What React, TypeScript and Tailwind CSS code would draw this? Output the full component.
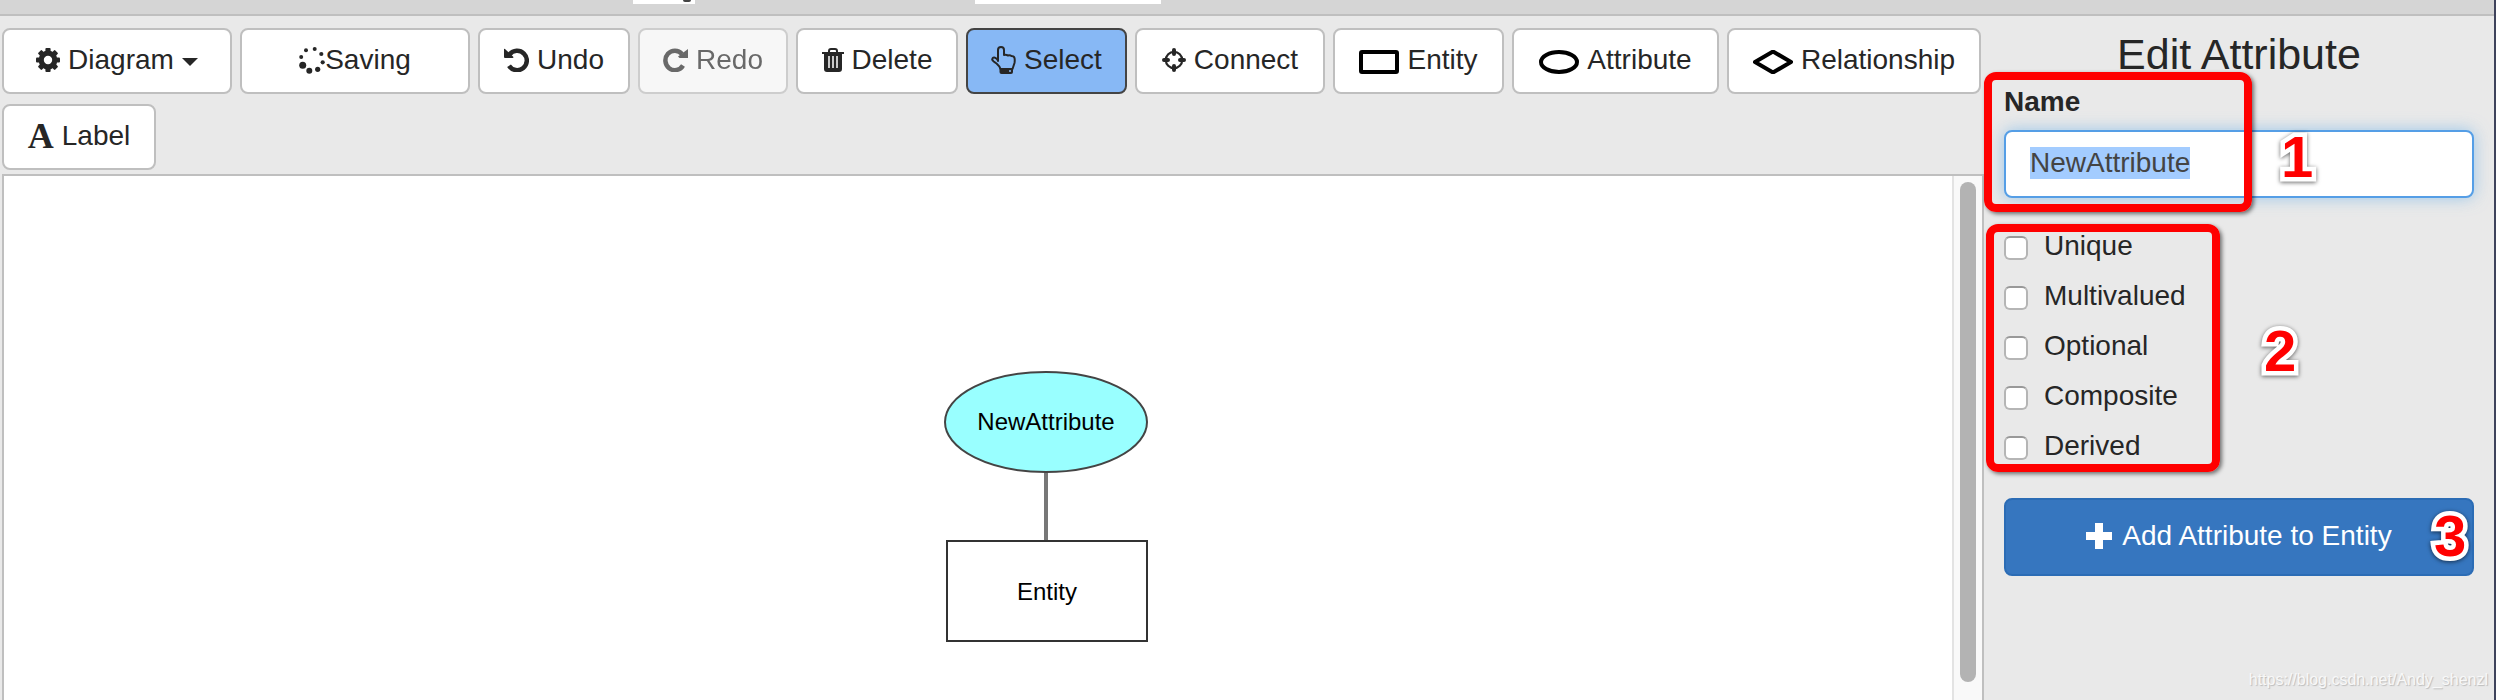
import type { ReactNode } from "react";
import { useEffect, useRef, useState } from "react";

type ToolProps = {
  icon: ReactNode;
  label: string;
  width: string;
  active?: boolean;
  disabled?: boolean;
  caret?: boolean;
};

const CogIcon = () => (
  <svg viewBox="-12 -12 24 24" className="size-6 shrink-0" fill="currentColor">
    <circle r="6.800" fill="none" stroke="currentColor" strokeWidth="5.200" />
    {[0, 45, 90, 135, 180, 225, 270, 315].map((angle) => (
      <rect key={angle} x="-2.600" y="-12" width="5.200" height="5" rx="1" transform={`rotate(${angle})`} />
    ))}
  </svg>
);

const SpinnerIcon = () => (
  <svg viewBox="0 0 26 28" className="h-7 w-[26px] shrink-0" fill="currentColor">
    <circle cx="7" cy="4.300" r="2" />
    <circle cx="15.700" cy="3" r="2" />
    <circle cx="22.300" cy="8" r="2.100" />
    <circle cx="23.700" cy="16.300" r="2.100" />
    <circle cx="18.700" cy="23.300" r="2.600" />
    <circle cx="10.300" cy="24.700" r="3" />
    <circle cx="3.700" cy="19.300" r="3.500" />
    <circle cx="2.200" cy="11" r="2" />
  </svg>
);

const UndoIcon = () => (
  <svg viewBox="0 0 25 24" className="h-6 w-[25px] shrink-0">
    <path d="M5.500 6.500A9.700 9.700 0 1 1 5 17.800" fill="none" stroke="currentColor" strokeWidth="4.500" />
    <path d="M0 1q.5-.5 1 0l8.500 8q0 1-1 1H1q-1 0-1-1z" fill="currentColor" />
  </svg>
);

const RedoIcon = () => (
  <svg viewBox="0 0 25 24" className="h-6 w-[25px] shrink-0">
    <path d="M19 6A9.500 9.700 0 1 0 20 17.500" fill="none" stroke="currentColor" strokeWidth="4.500" />
    <path d="M25 1v9h-8.500L15 8.500z" fill="currentColor" />
  </svg>
);

const TrashIcon = () => (
  <svg viewBox="0 0 22 24" className="h-6 w-[22px] shrink-0">
    <path d="M7 5V3q0-2 2-2h4q2 0 2 2v2" fill="none" stroke="currentColor" strokeWidth="2" />
    <path d="M0 4h22v2h-2v15q0 3-3 3H5q-3 0-3-3V6H0z" fill="currentColor" />
    <path d="M7 8v12M11 8v12M15 8v12" stroke="white" strokeWidth="1.500" />
  </svg>
);

const HandIcon = () => (
  <svg viewBox="0 0 25 28" className="h-7 w-[25px] shrink-0">
    <path
      d="M7 15V4q0-3 3-3t3 3v5q2-.5 4 .5 2-.5 3.500.5 2.500 0 3 2 .5 2 0 5l-2 6H9.500q-1-3-4-5.500Q1.500 15 1.200 13.500q.5-2.500 2.300-2 2 .5 3.500 3z"
      fill="none"
      stroke="currentColor"
      strokeWidth="2"
      strokeLinejoin="round"
    />
    <path d="M8.500 22h13.500v4q0 2-2 2h-9.500q-2 0-2-2z" fill="currentColor" />
    <circle cx="19" cy="25" r="1" fill="#87b8f5" />
  </svg>
);

const TargetIcon = () => (
  <svg viewBox="0 0 24 24" className="size-6 shrink-0" fill="none" stroke="currentColor">
    <circle cx="12" cy="12" r="8.200" strokeWidth="2.200" />
    <path d="M12 2v4M12 18v4M2 12h4M18 12h4" strokeWidth="4" strokeLinecap="round" />
  </svg>
);

const RectIcon = () => (
  <svg viewBox="0 0 40 24" className="mt-1 h-6 w-10 shrink-0">
    <rect x="2" y="2" width="36" height="20" rx="1" fill="white" stroke="black" strokeWidth="4" />
  </svg>
);

const EllipseIcon = () => (
  <svg viewBox="0 0 40 24" className="mt-1 h-6 w-10 shrink-0">
    <ellipse cx="20" cy="12" rx="18" ry="10" fill="white" stroke="black" strokeWidth="4" />
  </svg>
);

const DiamondIcon = () => (
  <svg viewBox="0 0 40 24" className="mt-1 h-6 w-10 shrink-0">
    <path d="M20 1.500 38 12 20 22.500 2 12z" fill="white" stroke="black" strokeWidth="4" strokeLinejoin="round" />
  </svg>
);

const LetterIcon = () => (
  <span className="w-[26px] text-center font-['Liberation_Serif',serif] text-4xl font-bold">A</span>
);

const PlusIcon = () => (
  <svg viewBox="0 0 26 26" className="size-[26px]" fill="currentColor">
    <path d="M9 0h8v9h9v8h-9v9H9v-9H0V9h9z" />
  </svg>
);

const tools: ToolProps[] = [
  { icon: <CogIcon />, label: "Diagram", width: "w-[230px]", caret: true },
  { icon: <SpinnerIcon />, label: "Saving", width: "w-[230px]" },
  { icon: <UndoIcon />, label: "Undo", width: "w-[152px]" },
  { icon: <RedoIcon />, label: "Redo", width: "w-[150px]", disabled: true },
  { icon: <TrashIcon />, label: "Delete", width: "w-[162px]" },
  { icon: <HandIcon />, label: "Select", width: "w-[161px]", active: true },
  { icon: <TargetIcon />, label: "Connect", width: "w-[190px]" },
  { icon: <RectIcon />, label: "Entity", width: "w-[171px]" },
  { icon: <EllipseIcon />, label: "Attribute", width: "w-[207px]" },
  { icon: <DiamondIcon />, label: "Relationship", width: "w-[254px]" },
  { icon: <LetterIcon />, label: "Label", width: "w-[154px]" },
];

const ToolButton = ({ icon, label, width, active, disabled, caret }: ToolProps) => (
  <button
    type="button"
    disabled={disabled}
    className={`flex h-[66px] items-center justify-center rounded-lg border-2 pb-[2px] disabled:opacity-65 ${
      label === "Saving" ? "gap-0" : "gap-2"
    } ${active ? "border-[#444] bg-[#87b8f5]" : "border-[#bfbfbf] bg-white"} ${width}`}
  >
    {icon}
    <span>{label}</span>
    {caret && (
      <svg viewBox="0 0 16 8" className="mt-1 h-2 w-4" fill="currentColor">
        <path d="M0 0h16L8 8z" />
      </svg>
    )}
  </button>
);

const options = ["Unique", "Multivalued", "Optional", "Composite", "Derived"];

const Marker = ({ n, place }: { n: number; place: string }) => (
  <span
    className={`absolute text-[58px] leading-[58px] font-bold text-[#f00] drop-shadow-[0_1px_2px_#0009] [-webkit-text-stroke:9px_white] [paint-order:stroke_fill] [stroke-linejoin:round] ${place}`}
  >
    {n}
  </span>
);

const Diagram = () => (
  <svg
    className="absolute top-[194px] left-[940px] h-[274px] w-[206px] font-['Liberation_Sans',Arial,sans-serif]"
    viewBox="0 0 206 274"
  >
    <path d="M102 102v68" stroke="#777" strokeWidth="4" />
    <ellipse cx="102" cy="52" rx="101" ry="50" fill="#99ffff" stroke="#444" strokeWidth="2" />
    <rect x="3" y="171" width="200" height="100" fill="white" stroke="#333" strokeWidth="2" />
    <text x="102" y="60" textAnchor="middle" fontSize="24">
      NewAttribute
    </text>
    <text x="103" y="230" textAnchor="middle" fontSize="24">
      Entity
    </text>
  </svg>
);

const App = () => {
  const [name, setName] = useState("NewAttribute");
  const nameRef = useRef<HTMLInputElement>(null);

  // the name is ready to be typed over as soon as the panel opens
  useEffect(() => {
    nameRef.current?.focus();
    nameRef.current?.select();
  }, []);

  return (
    <div className="flex min-h-screen flex-col overflow-hidden border-r-2 border-[#3f435c] bg-[#e9e9e9] font-['Liberation_Sans',Arial,sans-serif] text-[28px] leading-10 text-[#262626]">
      <header className="relative h-4 border-b-2 border-[#bfbfbf] bg-[#d5d5d5]">
        <div className="absolute top-0 left-[633px] flex h-1 w-[62px] justify-end bg-white pr-1">
          <span className="h-[2px] w-2 rounded-b-full bg-[#444]" />
        </div>
        <div className="absolute top-0 left-[975px] h-1 w-[186px] bg-white" />
      </header>

      <div className="flex flex-1">
        <main className="flex min-w-0 flex-1 flex-col">
          <div className="flex flex-wrap gap-x-2 gap-y-[10px] pt-3 pb-1 pl-[2px]">
            {tools.map((tool) => (
              <ToolButton key={tool.label} {...tool} />
            ))}
          </div>
          <div className="relative ml-[2px] flex flex-1 justify-end border-2 border-b-0 border-[#bfbfbf] bg-white">
            <Diagram />
            <div className="flex w-[30px] justify-center border-l-2 border-[#e3e3e3] bg-[#f9f9f9] pt-[6px] pb-[18px]">
              <div className="w-4 rounded-full bg-[#b3b3b3]" />
            </div>
          </div>
        </main>

        <aside className="relative w-[510px] shrink-0 px-5 pt-3">
          <h2 className="text-center text-[43px] leading-[52px]">Edit Attribute</h2>
          <label htmlFor="name" className="mt-[2px] block font-bold">
            Name
          </label>
          <input
            id="name"
            ref={nameRef}
            value={name}
            onChange={(e) => setName(e.target.value)}
            className="mt-2 block h-[68px] w-full rounded-lg border-2 border-[#559ee6] bg-white px-6 pb-[2px] text-[#444] shadow-[0_0_16px_#66afe999] outline-none selection:bg-[#a3ccff] selection:text-[#444]"
          />
          <div className="mt-7 space-y-[10px]">
            {options.map((option) => (
              <label key={option} className="flex items-center gap-4">
                <input
                  type="checkbox"
                  className="mt-1 size-6 appearance-none rounded-md border-2 border-[#b5b5b5] border-t-[#999] bg-white"
                />
                {option}
              </label>
            ))}
          </div>
          <button
            type="button"
            className="mt-8 flex h-[78px] w-full items-center justify-center gap-[10px] rounded-lg border-2 border-[#2b6cb5] bg-[#3676bf] pb-[2px] text-white"
          >
            <PlusIcon />
            Add Attribute to Entity
          </button>

          <div className="absolute top-14 left-0 h-[140px] w-[268px] rounded-xl border-8 border-[#f00] shadow-[2px_2px_4px_#0008]" />
          <div className="absolute top-[208px] left-[2px] h-[248px] w-[234px] rounded-xl border-8 border-[#f00] shadow-[2px_2px_4px_#0008]" />
          <Marker n={1} place="top-[112px] left-[297px]" />
          <Marker n={2} place="top-[306px] left-[280px]" />
          <Marker n={3} place="top-[491px] left-[450px]" />
          <span className="absolute right-[6px] bottom-2 text-base text-[#f8f8f8] [text-shadow:1px_1px_1px_#bbb]">
            https://blog.csdn.net/Andy_shenzl
          </span>
        </aside>
      </div>
    </div>
  );
};

export default App;
